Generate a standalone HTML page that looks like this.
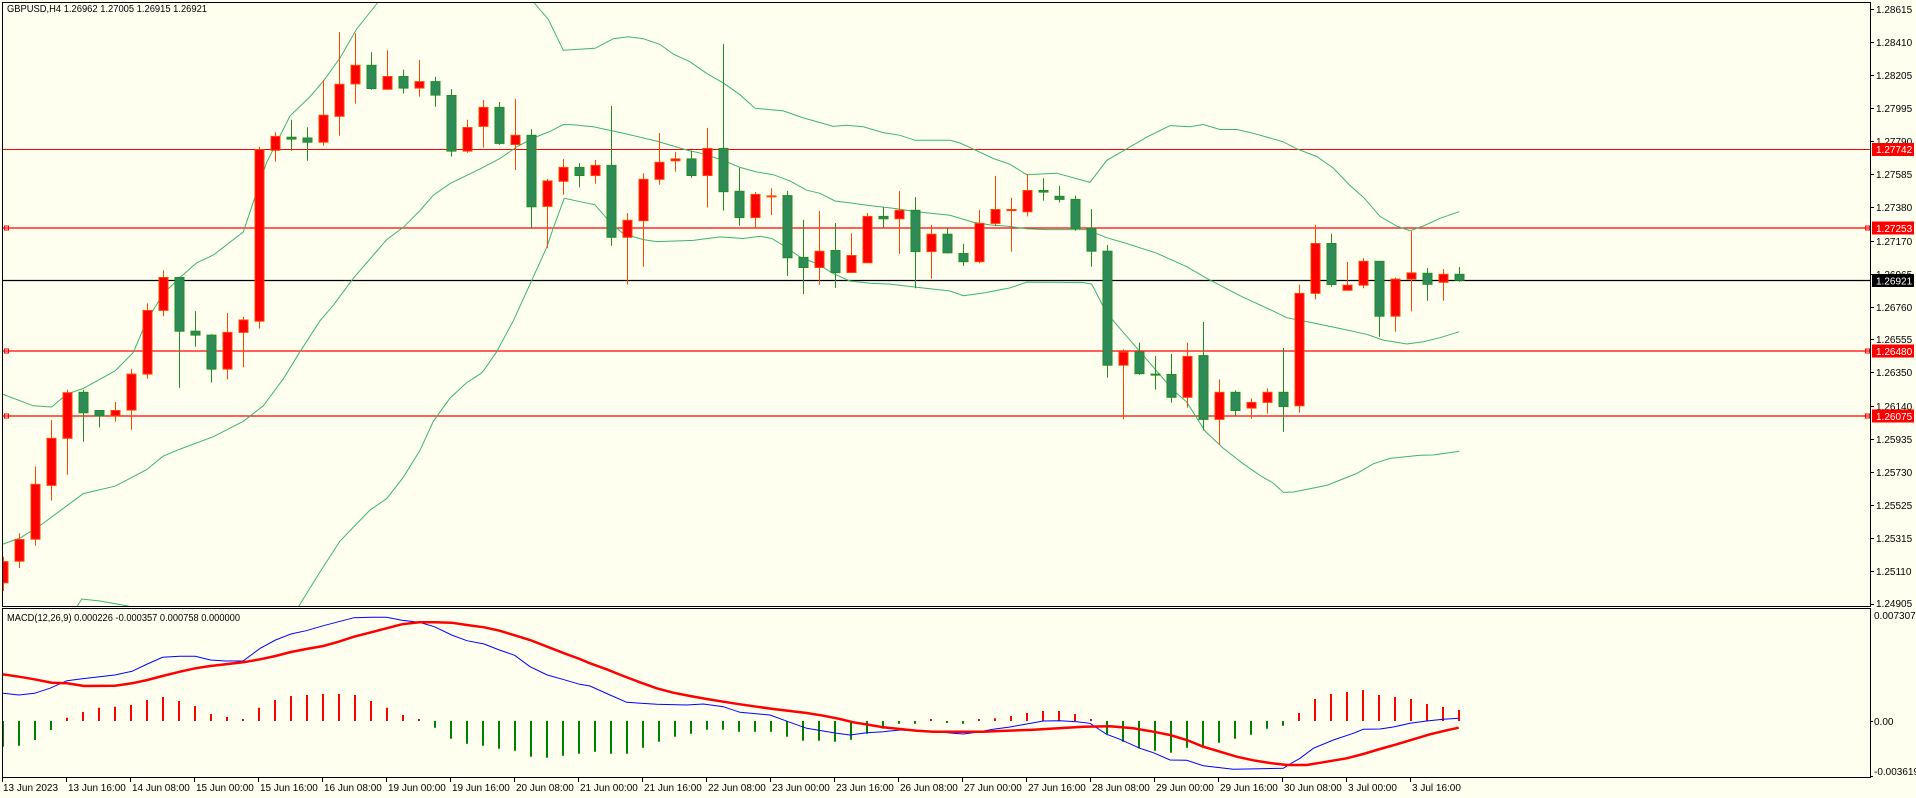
<!DOCTYPE html>
<html><head><meta charset="utf-8"><style>
html,body{margin:0;padding:0;background:#fffff0;}
svg{display:block;}
text{font-family:"Liberation Sans",Arial,sans-serif;font-size:10px;fill:#000;}
</style></head><body>
<svg width="1916" height="798" viewBox="0 0 1916 798" xmlns="http://www.w3.org/2000/svg">
<defs>
<clipPath id="cm"><rect x="3" y="3" width="1867" height="603"/></clipPath>
<clipPath id="cd"><rect x="3" y="609" width="1867" height="168"/></clipPath>
</defs>
<rect width="1916" height="798" fill="#fffff0"/>

<g clip-path="url(#cm)">
<!-- horizontal levels -->
<path d="M3 149.5H1870" stroke="#ff0000" stroke-width="1"/>
<path d="M3 228H1870M3 351H1870M3 416H1870" stroke="#ff0000" stroke-width="1.3"/>
<path d="M3 280.5H1870" stroke="#000" stroke-width="1.2"/>
<rect x="4.5" y="226" width="4" height="4" fill="none" stroke="#ff0000"/>
<rect x="4.5" y="349" width="4" height="4" fill="none" stroke="#ff0000"/>
<rect x="4.5" y="414" width="4" height="4" fill="none" stroke="#ff0000"/>
<rect x="1865.5" y="226" width="4" height="4" fill="none" stroke="#ff0000"/>
<rect x="1865.5" y="349" width="4" height="4" fill="none" stroke="#ff0000"/>
<rect x="1865.5" y="414" width="4" height="4" fill="none" stroke="#ff0000"/>

<!-- bollinger -->
<g fill="none" stroke="#3cb371" stroke-width="1">
<polyline points="2.7,394.2 33.3,405.8 51.7,407 66.7,394.2 83.3,388.4 115,371 133.3,352.5 146.7,320.8 163.3,293.7 180,277.5 196.7,262.8 213.3,255.1 243.3,231.9 266.7,162.3 290,116 310,96.6 323.3,81.2 340,58 356.7,29 376.7,3.9 380,-2"/>
<polyline points="532,-2 535,3.9 548.3,19.3 563.3,50.2 595,48.3 613.3,38.7 628.3,36.7 643.3,38.7 660,44.4 673.3,54.1 690,61.8 706.7,73.4 723.3,83.1 740,94.7 755,108.2 783.3,110.9 803.3,117.9 833.3,126.4 846.7,125.2 863.3,126.8 883.3,132.6 900,135.3 915,140.3 950,140.3 960,143 976.7,150.7 993.3,158.5 1010,164.3 1026.7,174.7 1056.7,173.2 1090,182.4 1106.7,160.4 1126.7,148.8 1146.7,137.2 1170,125.6 1190,126.8 1203.3,124.5 1220,129.5 1236.7,129.5 1253.3,133.3 1283.3,141.8 1296.7,148.8 1316.7,156.5 1333.3,168.1 1350,185.5 1363.3,197.1 1380,216.4 1396.7,226.1 1410,230.7 1423.3,226 1440,218.3 1459.3,211.7"/>
<polyline points="2.7,544.2 20,538 40,525.6 83.3,493.6 115,486.2 146.7,469.6 163.3,456.1 180,449.1 213.3,436.7 243.3,421.3 263.3,405.8 283.3,378.8 300,351.7 320,320.8 333.3,305.3 353.3,278.3 370,259 386.7,239.6 403.3,227.3 420,210.6 433.3,195.2 450,183.6 480,168.9 500,158.5 516.7,146.9 533.3,138 550,131.4 563.3,124.5 573.3,124.8 593.3,126.8 623.3,133.3 656.7,141.1 686.7,150 703.3,153.8 723.3,160.4 740,167.4 756.7,172 773.3,174.7 790,180.9 806.7,190.2 820,193.3 835,201 850,202.9 870,205.6 896.7,208.7 916.7,211.8 950,215.3 973.3,222.2 990,224.9 1006.7,226.1 1026.7,228.8 1046.7,229.6 1086.7,229.6 1106.7,237.7 1126.7,243.5 1156.7,253.2 1186.7,266.7 1206.7,278.3 1240,295.7 1273.3,311.1 1286.7,317.7 1306.7,321.6 1340,328.5 1366.7,334.3 1383.3,340.1 1406.7,344 1423.3,341.7 1440,337.7 1459.3,331.7"/>
<polyline points="76.7,607 81.7,599 100,601 133.3,607"/>
<polyline points="298.3,607 320,572 340,541 370,510 386.7,498.6 403.3,477.3 420,450.3 433.3,421.3 450,398.1 466.7,382.6 480,374.1 483.3,371 496.7,351.7 513.3,320.8 528.3,287.9 546.7,247.4 553.3,228 564.3,198.3 595,204.8 610,222.2 623.3,233.8 643.3,239.6 656.7,241.6 693.3,240.4 720,236.9 743.3,238.5 760,236.2 771.7,238.5 783.3,245.4 800,257 816.7,263.6 833.3,273.6 850,281 870,283.3 890,284.1 916.7,287.2 950,291 963.3,295.7 983.3,293 1010,287.9 1026.7,282.1 1083.3,282.5 1091.7,284.1 1106.7,313.1 1126.7,336.3 1143.3,355.6 1156.7,371 1173.3,390.4 1186.7,402 1205,431 1223.3,448.3 1243.3,463.8 1260,475.4 1273.3,483.1 1283.3,492.4 1293.3,492 1326.7,485.4 1356.7,473.5 1373.3,463.8 1390,458.4 1420,455.3 1433.3,455 1459.3,451.3"/>
</g>

<!-- wicks -->
<path fill="none" stroke="#ff4500" stroke-width="1" d="M3.5 556.6V591M19.5 533.4V568M35.5 466.5V545.7M51.5 420.1V500.5M67.5 389.6V474.6M115.5 402V421.7M131.5 369.1V429.8M147.5 303.4V378.8M163.5 270.2V316.2M227.5 313V379.5M243.5 316.9V367.2M259.5 146.9V328.5M275.5 132.2V161.6M323.5 80V145.7M339.5 32.1V135.7M355.5 33.2V103.6M387.5 50.2V89.3M419.5 59.9V96.6M467.5 119.8V152.7M483.5 100.1V147.6M515.5 98.9V170M547.5 179V248.1M563.5 158.9V194.8M595.5 160V183.6M627.5 213V284.5M643.5 173.2V266.7M659.5 133V184.7M675.5 151.9V171.6M707.5 127.9V207.5M755.5 192.1V228.8M771.5 188.2V214.9M819.5 211V284.8M851.5 233.4V272.5M867.5 213V262.8M899.5 190.9V253.9M931.5 224.9V278.7M979.5 209.9V263.2M995.5 175.9V226.1M1011.5 197.9V251.6M1027.5 174.3V216.4M1123.5 349.4V419.4M1187.5 342.8V407.8M1219.5 379.5V444.5M1251.5 398.5V418.6M1267.5 388.4V413.6M1299.5 284.5V412.8M1315.5 224.9V299.5M1347.5 262V290.3M1363.5 258.2V288.3M1395.5 277.5V331.6M1411.5 231.1V311.5M1443.5 269V300.7"/>
<path fill="none" stroke="#228b22" stroke-width="1" d="M83.5 389.6V441.8M99.5 410V427.5M179.5 277.5V387.7M195.5 311.1V346.7M211.5 334.3V382.6M291.5 119.8V150.7M307.5 127.2V160.8M371.5 52.2V89.7M403.5 69.6V93.5M435.5 76.9V106.7M451.5 89.3V156.5M499.5 102V144.9M531.5 129.1V228.8M579.5 163.1V187.5M611.5 105.9V245.8M691.5 151.1V177.8M723.5 44.1V210.6M739.5 167.7V225.7M787.5 190.9V276M803.5 219.9V294.1M835.5 223V287.9M883.5 207.5V227.3M915.5 197.1V288.3M947.5 228V253.5M963.5 243.9V265.9M1043.5 178.2V200.6M1059.5 185.9V202.5M1075.5 195.6V230.7M1091.5 209.1V266.7M1107.5 245V377.6M1139.5 342.8V374.9M1155.5 356V389.6M1171.5 354V402.7M1203.5 322V430.2M1235.5 390.4V415.9M1283.5 347.9V431.7M1331.5 233.8V286.8M1379.5 261.3V337M1427.5 268V300.7M1459.5 267V281.7"/>

<!-- red bodies -->
<g fill="#ff0000" stroke="#ff4500" stroke-width="1">
<rect x="-1" y="561.6" width="9" height="21.2"/><rect x="15" y="539.5" width="9" height="21.7"/><rect x="31" y="484.3" width="9" height="54.9"/><rect x="47" y="438.3" width="9" height="47.1"/><rect x="63" y="392.7" width="9" height="45.6"/><rect x="111" y="410.5" width="9" height="5.4"/><rect x="127" y="374.1" width="9" height="36"/><rect x="143" y="310.4" width="9" height="63.7"/><rect x="159" y="277.5" width="9" height="32.9"/><rect x="223" y="332.4" width="9" height="36.7"/><rect x="239" y="320" width="9" height="12.4"/><rect x="255" y="149.6" width="9" height="171.6"/><rect x="271" y="136.4" width="9" height="13.9"/><rect x="319" y="115.2" width="9" height="27"/><rect x="335" y="84.3" width="9" height="32"/><rect x="351" y="65.3" width="9" height="18.6"/><rect x="383" y="76.5" width="9" height="12.8"/><rect x="415" y="81.6" width="9" height="6.5"/><rect x="463" y="127.5" width="9" height="23.6"/><rect x="479" y="107.4" width="9" height="19"/><rect x="511" y="135.3" width="9" height="9.2"/><rect x="543" y="180.9" width="9" height="25.5"/><rect x="559" y="167.4" width="9" height="13.9"/><rect x="591" y="165.4" width="9" height="10.1"/><rect x="623" y="220.3" width="9" height="17"/><rect x="639" y="179.3" width="9" height="41.4"/><rect x="655" y="162.3" width="9" height="17"/><rect x="671" y="158.9" width="9" height="1.9"/><rect x="703" y="148.4" width="9" height="27.1"/><rect x="751" y="194.4" width="9" height="23.2"/><rect x="767" y="195.9" width="9" height="1"/><rect x="815" y="251.2" width="9" height="16.3"/><rect x="847" y="255.5" width="9" height="17"/><rect x="863" y="216.4" width="9" height="46.4"/><rect x="895" y="210.3" width="9" height="8.5"/><rect x="927" y="234.2" width="9" height="17.4"/><rect x="975" y="223.4" width="9" height="38.3"/><rect x="991" y="209.5" width="9" height="13.9"/><rect x="1007" y="209.5" width="9" height="1.1"/><rect x="1023" y="190.5" width="9" height="21.3"/><rect x="1119" y="352.1" width="9" height="13.1"/><rect x="1183" y="356.4" width="9" height="40.9"/><rect x="1215" y="392.3" width="9" height="27.1"/><rect x="1247" y="402.4" width="9" height="5.7"/><rect x="1263" y="392.3" width="9" height="10.1"/><rect x="1295" y="293.4" width="9" height="112.4"/><rect x="1311" y="243.5" width="9" height="49.9"/><rect x="1343" y="285.2" width="9" height="5.1"/><rect x="1359" y="261.3" width="9" height="23.9"/><rect x="1391" y="279.1" width="9" height="37.1"/><rect x="1407" y="272.9" width="9" height="6.2"/><rect x="1439" y="274.3" width="9" height="8"/>
</g>
<!-- green bodies -->
<g fill="#2e8b57" stroke="#228b22" stroke-width="1">
<rect x="79" y="392.3" width="9" height="20.5"/><rect x="95" y="410.5" width="9" height="5.4"/><rect x="175" y="277.5" width="9" height="53.7"/><rect x="191" y="331.2" width="9" height="3.9"/><rect x="207" y="335.1" width="9" height="34"/><rect x="287" y="137.2" width="9" height="1.9"/><rect x="303" y="138" width="9" height="4.2"/><rect x="367" y="65.3" width="9" height="23.2"/><rect x="399" y="76.5" width="9" height="11.6"/><rect x="431" y="81.6" width="9" height="13.5"/><rect x="447" y="95.5" width="9" height="55.6"/><rect x="495" y="107.4" width="9" height="36"/><rect x="527" y="135.3" width="9" height="71.5"/><rect x="575" y="167.4" width="9" height="8.1"/><rect x="607" y="165.4" width="9" height="71.9"/><rect x="687" y="158.9" width="9" height="16.6"/><rect x="719" y="148.4" width="9" height="43.3"/><rect x="735" y="191.3" width="9" height="26.3"/><rect x="783" y="195.6" width="9" height="62.2"/><rect x="799" y="257.4" width="9" height="10.1"/><rect x="831" y="250.5" width="9" height="22"/><rect x="879" y="216.4" width="9" height="2.4"/><rect x="911" y="210.3" width="9" height="41.3"/><rect x="943" y="234.2" width="9" height="18.6"/><rect x="959" y="253.5" width="9" height="8.2"/><rect x="1039" y="190.5" width="9" height="1.6"/><rect x="1055" y="196.3" width="9" height="3.1"/><rect x="1071" y="199.4" width="9" height="29"/><rect x="1087" y="228.4" width="9" height="22.8"/><rect x="1103" y="251.2" width="9" height="114"/><rect x="1135" y="352.1" width="9" height="21.6"/><rect x="1151" y="374.1" width="9" height="1"/><rect x="1167" y="374.5" width="9" height="22.8"/><rect x="1199" y="355.6" width="9" height="63.8"/><rect x="1231" y="392.3" width="9" height="18.2"/><rect x="1279" y="392.3" width="9" height="14.3"/><rect x="1327" y="243.5" width="9" height="41"/><rect x="1375" y="261.3" width="9" height="54.9"/><rect x="1423" y="273.3" width="9" height="11"/><rect x="1455" y="274.3" width="9" height="6"/>
</g>
</g>

<!-- MACD panel -->
<g clip-path="url(#cd)">
<path fill="none" stroke="#008000" stroke-width="2" d="M3 721V746.7M19 721V745.7M35 721V740M51 721V730M435 721V727.7M451 721V738.7M467 721V743.7M483 721V745.7M499 721V748.7M515 721V750.7M531 721V756.7M547 721V757.7M563 721V755.7M579 721V753.7M595 721V751.7M611 721V753.7M627 721V753.7M643 721V747.7M659 721V741.7M675 721V736.7M691 721V733.7M707 721V729.7M723 721V729.7M739 721V731.7M755 721V731.7M771 721V731.7M787 721V736.7M803 721V740.7M819 721V740.7M835 721V741.7M851 721V739.7M867 721V733.7M883 721V728.7M899 721V723.7M915 721V723.7M947 721V723M963 721V723.7M1107 721V734M1123 721V741.7M1139 721V748.3M1155 721V750.7M1171 721V752.7M1187 721V747.7M1203 721V747.7M1219 721V742.7M1235 721V738.7M1251 721V734.7M1267 721V728.7M1283 721V725.7"/>
<path fill="none" stroke="#ff0000" stroke-width="2" d="M67 721V717.7M83 721V712M99 721V707.7M115 721V706.7M131 721V705M147 721V700M163 721V697M179 721V701M195 721V706M211 721V714M227 721V717M243 721V719M259 721V707.7M275 721V700M291 721V696M307 721V695M323 721V694M339 721V694M355 721V695M371 721V701M387 721V707.7M403 721V715M419 721V719M931 721V719M979 721V719M995 721V718.3M1011 721V716M1027 721V713M1043 721V711M1059 721V711M1075 721V714M1091 721V719M1299 721V713M1315 721V699M1331 721V694M1347 721V692M1363 721V690M1379 721V695M1395 721V697M1411 721V699M1427 721V704M1443 721V707M1459 721V710"/>
<polyline fill="none" stroke="#0000ff" stroke-width="1" points="3,693.3 19,695 34.4,693.3 49.8,688.3 67,680.7 82.3,678.7 99.5,676.7 114.8,675 132,671.3 147.3,664 162.6,657.3 179.9,656.3 195.2,656.3 210.5,660 225.8,661 243,661 260.2,648.3 275.5,640 290.9,634 306.2,630.7 323.4,625.7 338.7,621.7 354,617.7 371.2,617.3 386.5,617.3 401.8,620.3 419.1,622.3 434.4,626.7 451.6,635 466.9,640.7 484.1,644 499.4,650 514.7,655.3 530,666.7 547.3,675 562.6,679.3 579.8,684.3 590,686 610,695 626.7,702.3 656.7,704.3 686.7,705 703.3,704 723.3,706.7 740,712.3 770,715 790,722.3 806.7,728.3 836.7,733.3 850,735 866.7,732.7 883.3,731.7 900,730 916.7,731 936.7,731.7 953.3,733.3 963.3,734 976.7,732.3 993.3,729.3 1010,727 1026.7,724 1043.3,721 1060,720.7 1076.7,721.7 1090,723.3 1100,730 1106.7,734.3 1120,739.3 1140,748.3 1153.3,752.7 1170,760 1186.7,760.3 1203.3,765.7 1233.3,769.3 1260,768.7 1283.3,768.3 1290,764 1300,758.3 1313.3,748.3 1333.3,740 1353.3,733.3 1363.3,729.3 1380,729 1393.3,727 1410,723.3 1426.7,721 1443.3,719.3 1458.7,718.3"/>
<polyline fill="none" stroke="#ff0000" stroke-width="2.5" points="3,674.3 19,676.7 34.4,679.3 51.7,682.7 67,683.3 84.2,686 114.8,685.7 132,683.3 147.3,680 162.6,676 179.9,671.7 195.2,668.3 210.5,666 225.8,664.3 243,662.3 260.2,659.3 275.5,656 290.9,652 306.2,649 323.4,646 338.7,641.7 354,636.7 371.2,632.3 386.5,628.3 401.8,624.3 419.1,622.3 434.4,622.3 451.6,622.7 466.9,625 484.1,627.3 499.4,630.7 514.7,635.3 530,640 547.3,646.7 562.6,652.7 579.8,659 590,663.3 606.7,669.3 623.3,676 640,682.3 656.7,688.3 673.3,692.7 690,696 706.7,699 723.3,701.7 740,704.3 756.7,706.7 773.3,709 790,711 806.7,713 823.3,715.7 840,719 853.3,722.3 870,725 883.3,727.3 900,729 916.7,730.7 933.3,731.7 983.3,731.7 1000,731 1033.3,729.7 1066.7,727.7 1083.3,726.7 1110,726.3 1133.3,728.3 1153.3,731.7 1170,735 1186.7,740 1203.3,746.7 1220,751.7 1236.7,756.7 1253.3,760.3 1270,763 1286.7,765 1306.7,765 1326.7,761.7 1346.7,758.3 1363.3,754 1380,749 1396.7,744.3 1413.3,739.3 1430,734.3 1446.7,730.3 1458.7,727.7"/>
</g>

<!-- frames -->
<rect x="2.5" y="2.5" width="1868" height="604" fill="none" stroke="#000" stroke-width="1"/>
<rect x="2.5" y="608.5" width="1868" height="169" fill="none" stroke="#000" stroke-width="1"/>

<!-- price axis ticks -->
<path stroke="#000" stroke-width="1" d="M1870 9.5h4M1870 42.5h4M1870 75.5h4M1870 108.5h4M1870 141.5h4M1870 174.5h4M1870 207.5h4M1870 241.5h4M1870 274.5h4M1870 307.5h4M1870 339.5h4M1870 372.5h4M1870 406.5h4M1870 439.5h4M1870 472.5h4M1870 505.5h4M1870 538.5h4M1870 571.5h4M1870 604.5h4M1870 721.5h3M1870 776.5h3"/>
<g>
<text x="1876" y="13">1.28615</text>
<text x="1876" y="46">1.28410</text>
<text x="1876" y="79">1.28205</text>
<text x="1876" y="112">1.27995</text>
<text x="1876" y="145">1.27790</text>
<text x="1876" y="178">1.27585</text>
<text x="1876" y="211">1.27380</text>
<text x="1876" y="245">1.27170</text>
<text x="1876" y="278">1.26965</text>
<text x="1876" y="311">1.26760</text>
<text x="1876" y="343">1.26555</text>
<text x="1876" y="376">1.26350</text>
<text x="1876" y="410">1.26140</text>
<text x="1876" y="443">1.25935</text>
<text x="1876" y="476">1.25730</text>
<text x="1876" y="509">1.25525</text>
<text x="1876" y="542">1.25315</text>
<text x="1876" y="575">1.25110</text>
<text x="1876" y="607">1.24905</text>
<text x="1874" y="619">0.007307</text>
<text x="1874" y="725">0.00</text>
<text x="1874" y="775">-0.003619</text>
</g>
<!-- highlighted price labels -->
<rect x="1872" y="143" width="42" height="13" fill="#ff0000"/>
<text x="1876" y="153" style="fill:#fff">1.27742</text>
<rect x="1872" y="221.5" width="42" height="13" fill="#ff0000"/>
<text x="1876" y="232" style="fill:#fff">1.27253</text>
<rect x="1872" y="274" width="42" height="13" fill="#000"/>
<text x="1876" y="284.5" style="fill:#fff">1.26921</text>
<rect x="1872" y="344.5" width="42" height="13" fill="#ff0000"/>
<text x="1876" y="355" style="fill:#fff">1.26480</text>
<rect x="1872" y="409.5" width="42" height="13" fill="#ff0000"/>
<text x="1876" y="420" style="fill:#fff">1.26075</text>

<!-- header texts -->
<text x="7" y="12" textLength="200" lengthAdjust="spacingAndGlyphs">GBPUSD,H4  1.26962 1.27005 1.26915 1.26921</text>
<text x="7" y="621" textLength="233" lengthAdjust="spacingAndGlyphs">MACD(12,26,9) 0.000226 -0.000357 0.000758 0.000000</text>

<!-- time axis -->
<path stroke="#000" stroke-width="1" d="M2.5 778v4M66.5 778v4M130.5 778v4M194.5 778v4M258.5 778v4M322.5 778v4M386.5 778v4M450.5 778v4M514.5 778v4M578.5 778v4M642.5 778v4M706.5 778v4M770.5 778v4M834.5 778v4M898.5 778v4M962.5 778v4M1026.5 778v4M1090.5 778v4M1154.5 778v4M1218.5 778v4M1282.5 778v4M1346.5 778v4M1410.5 778v4"/>
<g>
<text x="3" y="791">13 Jun 2023</text>
<text x="68" y="791">13 Jun 16:00</text>
<text x="132" y="791">14 Jun 08:00</text>
<text x="196" y="791">15 Jun 00:00</text>
<text x="260" y="791">15 Jun 16:00</text>
<text x="324" y="791">16 Jun 08:00</text>
<text x="388" y="791">19 Jun 00:00</text>
<text x="452" y="791">19 Jun 16:00</text>
<text x="516" y="791">20 Jun 08:00</text>
<text x="580" y="791">21 Jun 00:00</text>
<text x="644" y="791">21 Jun 16:00</text>
<text x="708" y="791">22 Jun 08:00</text>
<text x="772" y="791">23 Jun 00:00</text>
<text x="836" y="791">23 Jun 16:00</text>
<text x="900" y="791">26 Jun 08:00</text>
<text x="964" y="791">27 Jun 00:00</text>
<text x="1028" y="791">27 Jun 16:00</text>
<text x="1092" y="791">28 Jun 08:00</text>
<text x="1156" y="791">29 Jun 00:00</text>
<text x="1220" y="791">29 Jun 16:00</text>
<text x="1284" y="791">30 Jun 08:00</text>
<text x="1348" y="791">3 Jul 00:00</text>
<text x="1412" y="791">3 Jul 16:00</text>
</g>
</svg>
</body></html>
